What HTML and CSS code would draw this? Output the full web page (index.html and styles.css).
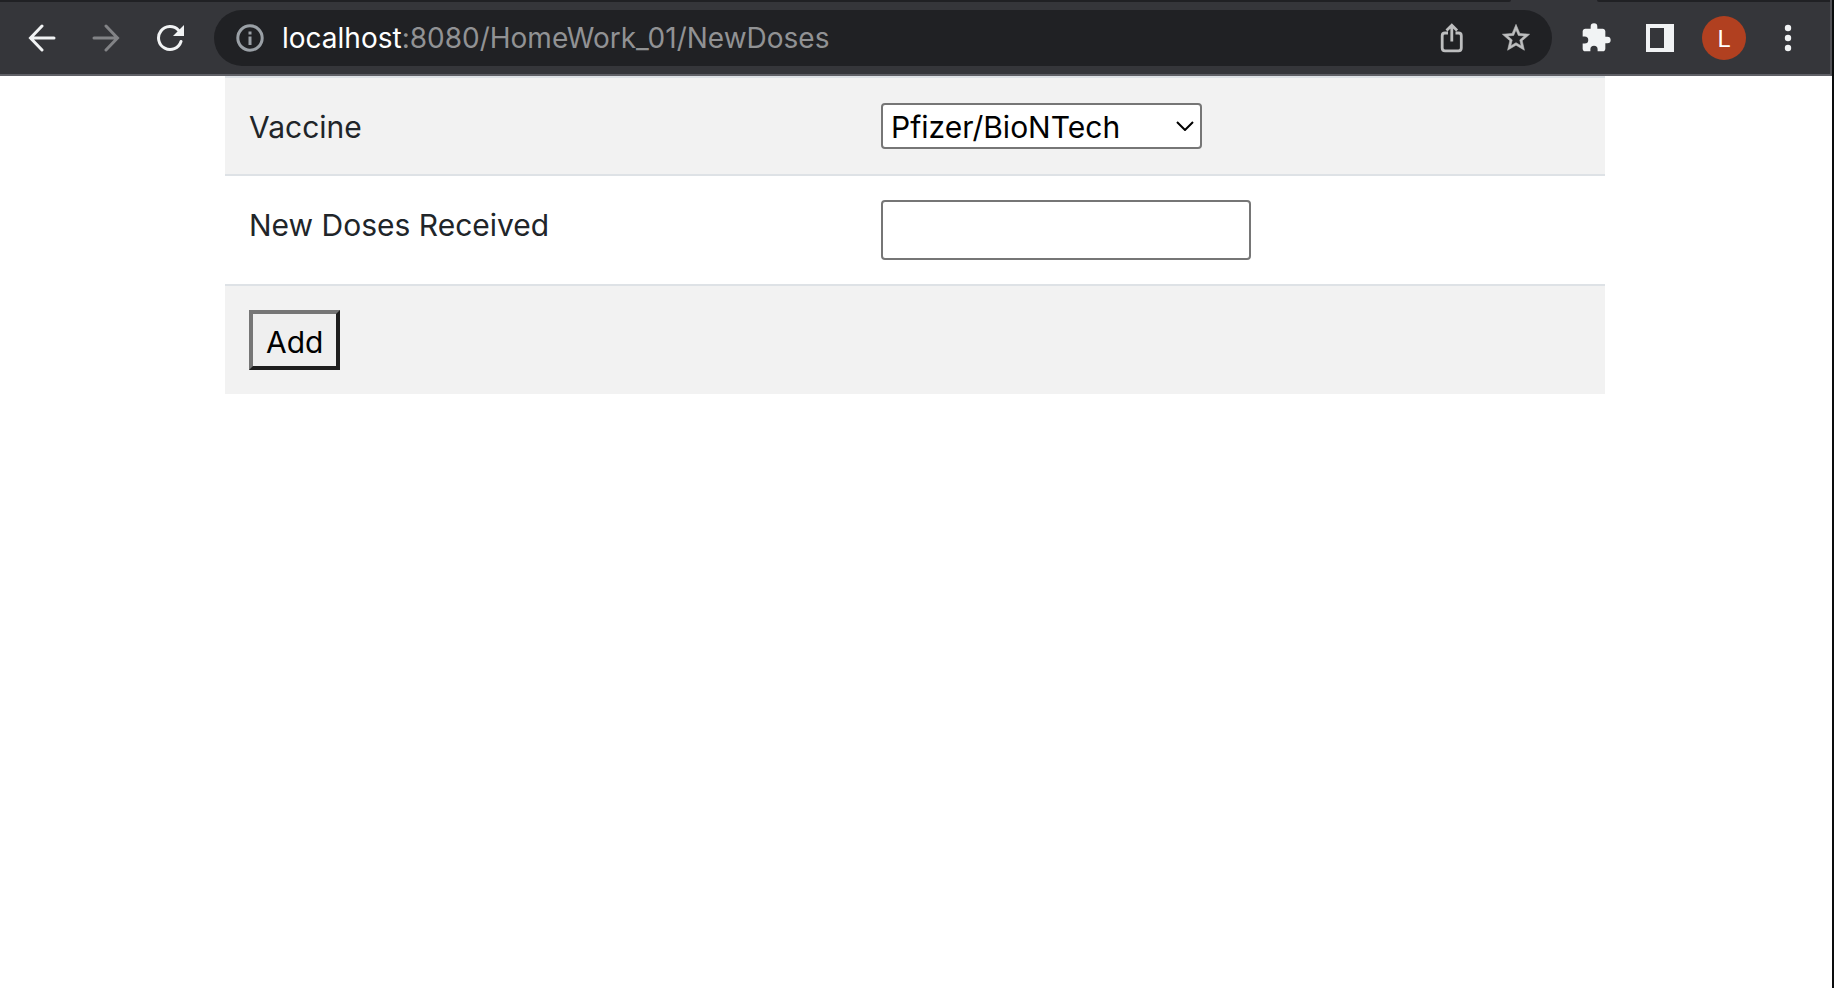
FILE: index.html
```html
<!DOCTYPE html>
<html lang="en">
<head>
<meta charset="utf-8">
<title>New Doses</title>
<link rel="stylesheet" href="styles.css">
</head>
<body>
<div class="window">
  <header class="chrome">
    <div class="tabstrip"><span class="tabs-left"></span><span class="tabs-right"></span></div>
    <div class="toolbar">
      <button class="tool" type="button" aria-label="Back">
        <svg width="28" height="28" viewBox="0 0 28 28"><path d="M26 14H3M14 2 2.500 14 14 26" fill="none" stroke="#f1f3f4" stroke-width="3" stroke-linecap="round" stroke-linejoin="miter"/></svg>
      </button>
      <button class="tool" type="button" aria-label="Forward">
        <svg width="28" height="28" viewBox="0 0 28 28"><path d="M2 14H25M14 2 25.500 14 14 26" fill="none" stroke="#828386" stroke-width="3" stroke-linecap="round" stroke-linejoin="miter"/></svg>
      </button>
      <button class="tool" type="button" aria-label="Reload">
        <svg width="28" height="28" viewBox="0 0 28 28"><path d="M25 17.500A11.500 11.500 0 1 1 22.500 6.200" fill="none" stroke="#f1f3f4" stroke-width="3" stroke-linecap="round"/><path d="M28 1V12H17Z" fill="#f1f3f4"/></svg>
      </button>
      <div class="omnibox">
        <svg class="info" width="28" height="28" viewBox="0 0 28 28"><circle cx="14" cy="14" r="12.200" fill="none" stroke="#9aa0a6" stroke-width="3"/><path d="M12.500 7.500h3v3h-3zM12.500 12.500h3V21h-3z" fill="#9aa0a6"/></svg>
        <div class="url"><span class="host">localhost</span>:8080/HomeWork_01/NewDoses</div>
        <button class="tool" type="button" aria-label="Share">
          <svg width="24" height="30" viewBox="0 0 24 30"><path d="M8 10H5Q2.200 10 2.200 12.800V25Q2.200 27.800 5 27.800H18.500Q21.300 27.800 21.300 25V12.800Q21.300 10 18.500 10H15.500M11.800 18.500V3M6.500 7.500l5.300-5.300 5.300 5.300" fill="none" stroke="#bdbebf" stroke-width="2.800"/></svg>
        </button>
        <button class="tool" type="button" aria-label="Bookmark">
          <svg width="30" height="30" viewBox="1 1 22 22"><path d="m22 9.240-7.190-.62L12 2 9.190 8.630 2 9.240l5.460 4.730L5.820 21 12 17.270 18.180 21l-1.630-7.030L22 9.240zM12 15.400l-3.760 2.270 1-4.280-3.320-2.880 4.380-.38L12 6.100l1.710 4.040 4.380.38-3.320 2.880 1 4.280L12 15.400z" fill="#bdbebf" stroke="#bdbebf" stroke-width=".4"/></svg>
        </button>
      </div>
      <button class="tool" type="button" aria-label="Extensions">
        <svg width="32" height="32" viewBox="0 0 24 24"><path d="M20.500 11H19V7c0-1.100-.9-2-2-2h-4V3.500a2.500 2.500 0 0 0-5 0V5H4c-1.100 0-2 .9-2 2v3.800h1.500a2.700 2.700 0 0 1 0 5.400H2V20c0 1.100.9 2 2 2h3.800v-1.500a2.700 2.700 0 0 1 5.400 0V22H17c1.100 0 2-.9 2-2v-4h1.500a2.500 2.500 0 0 0 0-5z" fill="#f1f3f4"/></svg>
      </button>
      <button class="tool" type="button" aria-label="Side panel">
        <svg width="28" height="28" viewBox="0 0 28 28"><path d="M0 0H28V28H0ZM4 4V24H18V4Z" fill="#f1f3f4" fill-rule="evenodd"/></svg>
      </button>
      <button class="tool" type="button" aria-label="Profile"><span class="avatar">L</span></button>
      <button class="tool" type="button" aria-label="Menu">
        <svg width="8" height="28" viewBox="0 0 8 28"><g fill="#f1f3f4"><circle cx="4" cy="4" r="3.200"/><circle cx="4" cy="14" r="3.200"/><circle cx="4" cy="24" r="3.200"/></g></svg>
      </button>
    </div>
  </header>
  <main class="page">
    <form class="container">
      <table class="table">
        <tbody>
          <tr>
            <td class="name"><label class="label" for="vaccine">Vaccine</label></td>
            <td>
              <div class="select-wrap">
                <select id="vaccine" class="select"><option>Pfizer/BioNTech</option></select>
                <svg class="chevron" width="18" height="10" viewBox="0 0 18 10"><path d="M1 1l8 8 8-8" fill="none" stroke="#000" stroke-width="2"/></svg>
              </div>
            </td>
          </tr>
          <tr>
            <td class="name"><label class="label" for="doses">New Doses Received</label></td>
            <td><input id="doses" class="input" type="text"></td>
          </tr>
          <tr>
            <td class="name"><button class="add" type="submit">Add</button></td>
            <td></td>
          </tr>
        </tbody>
      </table>
    </form>
  </main>
</div>
</body>
</html>
```
FILE: styles.css
```css
* { box-sizing: border-box; }

body {
  margin: 0;
  background: #fff;
  color: #212529;
  font: 30px/48px Inter, "Liberation Sans", sans-serif;
}

button, input, select { font: inherit; margin: 0; }
svg { display: block; }

.window {
  min-height: 100vh;
  border-right: 2px solid #0a0c0d;
}

.chrome {
  background: #35363a;
  border-bottom: 2px solid #5f6066;
  border-right: 2px solid #505156;
}

.tabstrip {
  display: flex;
  gap: 86px;
  height: 2px;
}

.tabs-left {
  flex: 1;
  background: #202124;
  border-bottom-right-radius: 2px;
}

.tabs-right {
  width: 233px;
  background: #202124;
  border-bottom-left-radius: 2px;
}

.toolbar {
  display: flex;
  align-items: center;
  height: 72px;
  padding: 0 10px;
}

.tool {
  display: flex;
  flex: none;
  align-items: center;
  justify-content: center;
  width: 64px;
  height: 56px;
  padding: 0;
  border: 0;
  background: none;
}

.omnibox {
  display: flex;
  flex: 1;
  align-items: center;
  height: 56px;
  margin: 0 12px;
  padding: 0 4px 0 22px;
  border-radius: 28px;
  background: #202124;
}

.info { flex: none; }

.url {
  flex: 1;
  margin-left: 18px;
  color: #919294;
  font-size: 28px;
  white-space: nowrap;
}

.host { color: #fff; }

.avatar {
  width: 44px;
  height: 44px;
  border-radius: 50%;
  background: #b14020;
  color: #fff;
  font: 24px/46px Roboto, sans-serif;
  text-align: center;
}

.page { padding-right: 2px; }

.container {
  max-width: 1440px;
  margin: 0 auto;
  padding: 0 30px;
}

.table {
  width: 100%;
  border-collapse: separate;
  border-spacing: 0;
}

.table td {
  padding: 24px;
  border-top: 2px solid #dee2e6;
  vertical-align: top;
}

.table tr:nth-child(odd) { background: #f2f2f2; }

.name { width: 632px; }

.label {
  display: block;
  padding-top: 2px;
  line-height: 46px;
}

.select-wrap {
  display: flex;
  position: relative;
  align-items: center;
  width: 321px;
  height: 48px;
}

.select {
  width: 100%;
  height: 46px;
  padding: 2px 8px 0;
  border: 2px solid #767676;
  border-radius: 4px;
  background: #fff;
  color: #000;
  line-height: 40px;
  appearance: none;
}

.chevron {
  position: absolute;
  right: 8px;
  pointer-events: none;
}

.input {
  display: block;
  width: 370px;
  height: 60px;
  padding: 2px 4px;
  border: 2px solid #767676;
  border-radius: 4px;
  background: #fff;
}

.add {
  display: block;
  height: 60px;
  padding: 4px 13px 2px;
  border: 4px solid;
  border-color: #767676 #1e1e1e #1e1e1e #767676;
  background: #efefef;
  color: #000;
}
```
